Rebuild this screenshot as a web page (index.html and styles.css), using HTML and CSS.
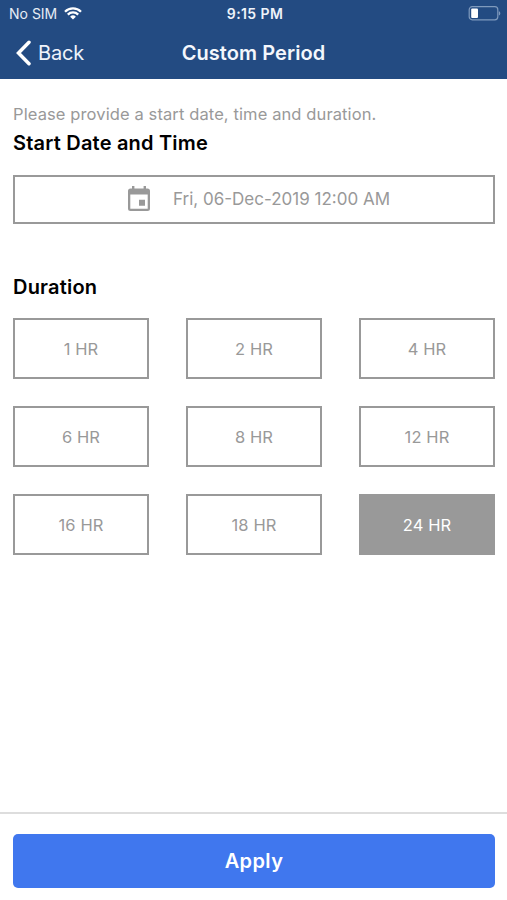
FILE: index.html
```html
<!DOCTYPE html>
<html lang="en">
<head>
<meta charset="utf-8">
<title>Custom Period</title>
<link rel="stylesheet" href="styles.css">
</head>
<body>
<div class="screen">
  <header class="header">
    <div class="status">
      <div class="carrier"><span>No SIM</span>
        <svg class="wifi" width="18" height="13" viewBox="0 0 18 13" fill="none" stroke="#fff" stroke-width="2.3"><path d="M1 4.7a11.4 11.4 0 0 1 16 0M3.8 7.6a7.4 7.4 0 0 1 10.4 0"/><path d="M9 12.5 6.1 9.7a4.2 4.2 0 0 1 5.8 0z" fill="#fff" stroke="none"/></svg>
      </div>
      <div class="clock">9:15 PM</div>
      <svg class="battery" width="33" height="15" viewBox="0 0 33 15"><rect x="1.2" y=".7" width="28.6" height="13.1" rx="3" fill="none" stroke="#7f9abd" stroke-width="1.2"/><rect x="3.2" y="2.6" width="6.800" height="9.3" rx="1" fill="#fff"/><path d="M30.8 5.2c2 .5 2 3.8 0 4.3z" fill="#7f9abd"/></svg>
    </div>
    <nav class="nav">
      <a class="back"><svg width="16" height="26" viewBox="0 0 16 26" fill="none" stroke="#fff" stroke-width="3.5" stroke-linecap="round"><path d="M14 2.300 3.500 13 14 23.700"/></svg><span>Back</span></a>
      <h1 class="title">Custom Period</h1>
    </nav>
  </header>
  <main class="content">
    <p class="hint">Please provide a start date, time and duration.</p>
    <h2 class="heading start">Start Date and Time</h2>
    <button class="date">
      <svg width="24" height="26" viewBox="0 0 24 26"><path fill="#999" fill-rule="evenodd" d="M5 0h2.400v2.500h9.200V0H19v2.500h1.500A2.500 2.500 0 0 1 23 5v17.500a2.500 2.500 0 0 1-2.500 2.500h-17A2.500 2.500 0 0 1 1 22.500V5a2.500 2.500 0 0 1 2.500-2.500H5zM3.300 8.500v14.300h17.400V8.500zM12 13.700h6v6h-6z"/></svg>
      <span>Fri, 06-Dec-2019 12:00 AM</span>
    </button>
    <h2 class="heading duration">Duration</h2>
    <div class="grid">
      <button class="option">1 HR</button><button class="option">2 HR</button><button class="option">4 HR</button>
      <button class="option">6 HR</button><button class="option">8 HR</button><button class="option">12 HR</button>
      <button class="option">16 HR</button><button class="option">18 HR</button><button class="option selected">24 HR</button>
    </div>
  </main>
  <footer class="footer"><button class="apply">Apply</button></footer>
</div>
</body>
</html>
```
FILE: styles.css
```css
* { box-sizing: border-box; }
body { margin: 0; font-family: Inter, "Liberation Sans", sans-serif; background: #fff; }
button { font-family: inherit; margin: 0; padding: 0; border-radius: 0; }
h1, h2, p { margin: 0; }
.screen { height: 900px; display: flex; flex-direction: column; }
.header { height: 79px; background: #234b82; color: #fff; flex: none; }
.status { height: 27px; display: grid; grid-template-columns: 1fr auto 1fr; align-items: center; padding: 0 6px 0 9px; }
.carrier { display: flex; align-items: center; gap: 7px; font-size: 14px; color: #e6ecf5; }
.wifi { display: block; }
.clock { font-size: 14px; font-weight: 600; letter-spacing: .4px; color: #eef3fa; }
.battery { justify-self: end; }
.nav { height: 52px; display: grid; grid-template-columns: 1fr auto 1fr; align-items: center; padding: 0 15px; }
.back { display: flex; align-items: center; gap: 7px; font-size: 20px; letter-spacing: -.2px; color: #eef3fa; }
.title { font-size: 20px; line-height: 24px; font-weight: 600; letter-spacing: .08px; color: #f4f7fc; }
.content { flex: 1; padding: 25px 12px 0 13px; }
.hint { font-size: 16.500px; line-height: 20px; letter-spacing: .11px; color: #999; }
.heading { font-size: 20px; line-height: 26px; font-weight: 600; letter-spacing: .2px; color: #000; }
.start { margin-top: 6px; }
.date { width: 100%; height: 49px; margin: 19px 0 0; padding: 0 0 2px 9px; border: 2px solid #999; background: #fff; display: flex; align-items: center; justify-content: center; gap: 22px; font-size: 17px; color: #999; }
.duration { margin-top: 50px; }
.grid { margin-top: 18px; display: grid; grid-template-columns: repeat(3, 136px); justify-content: space-between; row-gap: 27px; }
.option { height: 61px; border: 2px solid #999; background: #fff; color: #999; font-size: 16.500px; letter-spacing: .1px; }
.selected { background: #999; color: #fff; }
.footer { height: 88px; border-top: 2px solid #ddd; padding: 20px 12px 0 13px; flex: none; }
.apply { display: block; width: 100%; height: 54px; border: 0; border-radius: 5px; background: #4077ee; color: #fff; font-size: 20px; font-weight: 600; letter-spacing: .4px; }
```
